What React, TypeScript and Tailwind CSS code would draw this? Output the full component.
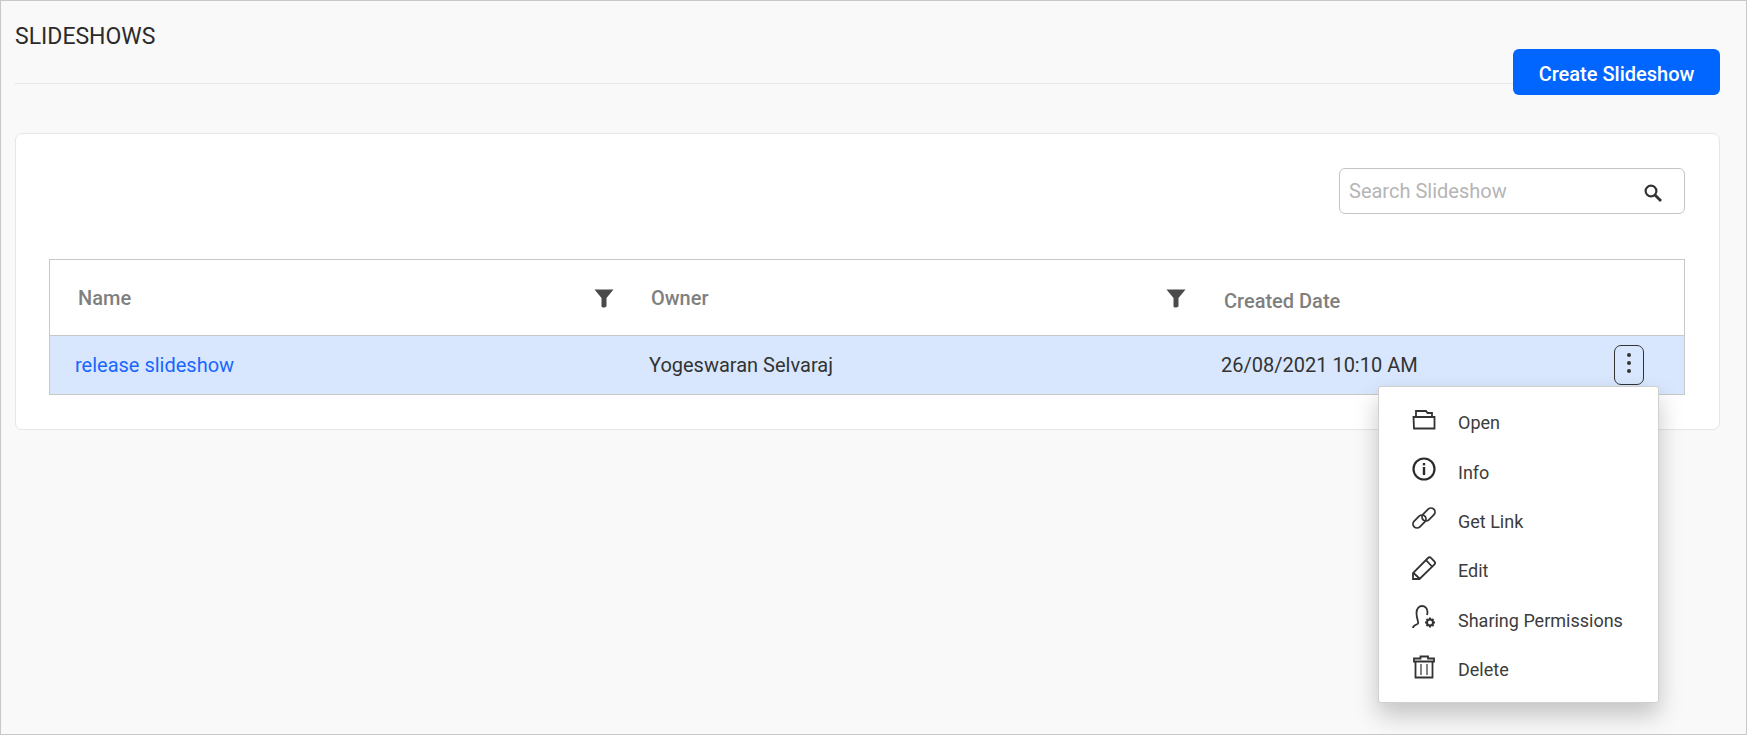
const Filter = () => (
  <svg width="20" height="19" viewBox="0 0 20 19" className="shrink-0">
    <path d="M0.5 0.5H19.5L12.5 9V17.5L10.5 18.5H8.5L7.5 17.5V9Z" fill="#4a4a4a" />
  </svg>
);

const stroke = { fill: "none", stroke: "#333333", strokeWidth: 1.8 } as const;

const icons: Record<string, React.ReactNode> = {
  Open: (
    <svg width="24" height="24" viewBox="0 0 24 24" {...stroke}>
      <path d="M4 9V3H14L15.500 5H20V9" />
      <path d="M1.500 9H22.500V20.500H2Z" />
    </svg>
  ),
  Info: (
    <svg width="24" height="24" viewBox="0 0 24 24" fill="none">
      <circle cx="12" cy="12" r="10.500" stroke="#2b2b2b" strokeWidth="2.200" />
      <rect x="10.800" y="10" width="2.400" height="8" fill="#2b2b2b" />
      <rect x="10.800" y="6" width="2.400" height="2.400" fill="#2b2b2b" />
    </svg>
  ),
  "Get Link": (
    <svg width="24" height="24" viewBox="0 0 24 24" {...stroke}>
      <rect x="0" y="11.500" width="15" height="8" rx="4" transform="rotate(-45 7.500 15.500)" />
      <rect x="9" y="4.500" width="15" height="8" rx="4" transform="rotate(-45 16.500 8.500)" />
    </svg>
  ),
  Edit: (
    <svg width="24" height="24" viewBox="0 0 24 24" {...stroke}>
      <path d="M1 23V17L16 2C17.300 0.900 18 0.900 19 2L22.500 5.500C23.500 6.800 23.300 7.500 22.500 8.300L7.500 23Z" />
      <path d="M1.500 17L7.500 22.500M14 4.200L20 10.500" />
    </svg>
  ),
  "Sharing Permissions": (
    <svg width="24" height="24" viewBox="0 0 24 24" {...stroke}>
      <path d="M1 23C1 20 5 20 6 18.500C7 17 4.500 14 4.500 8C4.500 3 7.500 1 10 1C13 1 15.500 3.500 15.500 7C15.500 8 15.300 9 15 10" />
      <circle cx="18" cy="17.500" r="3" strokeWidth="2" />
      <path d="M18 12.500V14M18 21V22.500M13 17.500H14.500M21.500 17.500H23M14.500 14L15.500 15M20.500 20L21.500 21M14.500 21L15.500 20M20.500 15L21.500 14" strokeWidth="2" />
    </svg>
  ),
  Delete: (
    <svg width="24" height="24" viewBox="0 0 24 24" {...stroke}>
      <path d="M2 6.500V3.500H8.500V1.500H16V3.500H22V6.500Z" />
      <path d="M3.500 6.500V22.500H20.500V6.500" />
      <path d="M9 9V20M15 9V20" strokeWidth="1.200" />
    </svg>
  ),
};

const items = ["Open", "Info", "Get Link", "Edit", "Sharing Permissions", "Delete"];

export default function App() {
  return (
    <div className="box-border h-[735px] w-[1747px] overflow-hidden border border-[#c8c8c8] bg-[#f9f9f9] px-[14px] font-['Roboto',sans-serif]">
      <header className="flex h-[132px] w-[1705px] items-start">
        <div className="box-border h-[83px] flex-1 border-b border-[#e6e6e6] pt-[20px]">
          <h1 className="text-[23px] leading-[32px] font-normal text-[#2b2b2b]">SLIDESHOWS</h1>
        </div>
        <button className="mt-[48px] h-[46px] w-[207px] rounded-[6px] bg-[#0066ff] pt-[4px] text-[20px] font-medium text-white">
          Create Slideshow
        </button>
      </header>
      <section className="relative box-border h-[297px] w-[1705px] rounded-[7px] border border-[#e6e6e6] bg-white pr-[34px] pl-[33px]">
        <div className="flex justify-end pt-[34px] pb-[45px]">
          <div className="box-border flex h-[46px] w-[346px] items-center justify-between rounded-[6px] border border-[#c4c4c4] pr-[22px] pl-[9px]">
            <span className="text-[20px] text-[#b5b5b5]">Search Slideshow</span>
            <svg width="18" height="18" viewBox="0 0 18 18" fill="none" stroke="#333333" className="mt-[3px]">
              <circle cx="7" cy="7" r="5.400" strokeWidth="2.200" />
              <path d="M11 11L17 17" strokeWidth="2.800" />
            </svg>
          </div>
        </div>
        <div className="box-border h-[136px] w-[1636px] border border-[#c8c8c8]">
          <div className="grid h-[75px] grid-cols-[573px_572px_1fr] text-[20px] font-medium text-[#7f7f7f]">
            <div className="flex items-center justify-between pt-[1px] pr-[9px] pl-[28px]">
              <span>Name</span>
              <Filter />
            </div>
            <div className="flex items-center justify-between pt-[1px] pr-[9px] pl-[28px]">
              <span>Owner</span>
              <Filter />
            </div>
            <div className="flex items-center pt-[7px] pl-[29px]">
              <span>Created Date</span>
            </div>
          </div>
          <div className="grid h-[59px] grid-cols-[573px_572px_1fr] border-t border-[#c8c8c8] bg-[#d8e7fd] text-[20px] text-[#333333]">
            <div className="flex items-center pl-[25px]">
              <span className="text-[#1a66ff]">release slideshow</span>
            </div>
            <div className="flex items-center pl-[26px]">
              <span>Yogeswaran Selvaraj</span>
            </div>
            <div className="flex items-center justify-between pr-[40px] pl-[26px]">
              <span>26/08/2021 10:10 AM</span>
              <button className="flex h-[40px] w-[30px] flex-col items-center justify-center gap-[4px] rounded-[7px] border border-[#333333] pb-[5px]">
                <i className="h-[4px] w-[4px] rounded-full bg-[#333333]" />
                <i className="h-[4px] w-[4px] rounded-full bg-[#333333]" />
                <i className="h-[4px] w-[4px] rounded-full bg-[#333333]" />
              </button>
            </div>
          </div>
        </div>
        <div className="absolute top-[252px] left-[1362px] box-border h-[317px] w-[281px] rounded-[3px] border border-[#d0d0d0] bg-white py-[11px] pl-[33px] shadow-[0_12px_24px_rgba(0,0,0,0.22)]">
          {items.map((label) => (
            <div key={label} className="flex h-[49.4px] items-center gap-[22px] text-[18px] text-[#3c3c3c]">
              <span className="flex h-[24px] w-[24px] -translate-y-[3px] items-center justify-center">{icons[label]}</span>
              <span>{label}</span>
            </div>
          ))}
        </div>
      </section>
    </div>
  );
}
